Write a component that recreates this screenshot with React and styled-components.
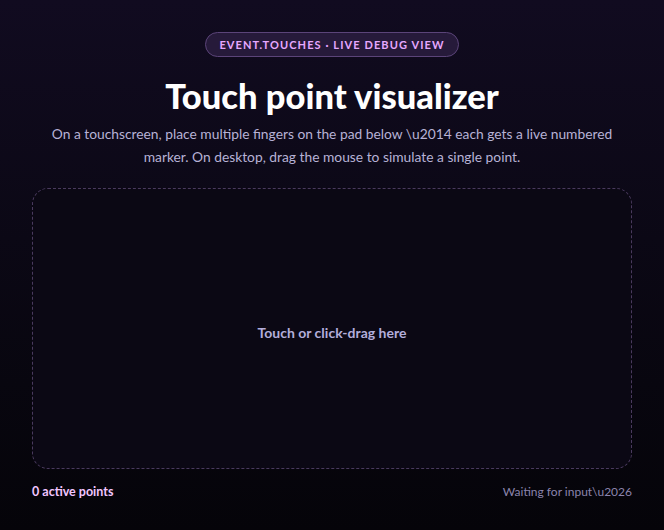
import React from "react";
import styled, { createGlobalStyle } from "styled-components";

const Global = createGlobalStyle`
  html, body { margin: 0; padding: 0; }
  body {
    min-height: 530px;
    background: linear-gradient(180deg, #110b20 0%, #0b0815 45%, #050409 100%);
    font-family: Lato, "Open Sans", sans-serif;
    color: #fff;
  }
`;

const Page = styled.main`
  max-width: 600px;
  margin: 0 auto;
  padding: 32px 0 0;
  display: flex;
  flex-direction: column;
  align-items: center;
`;

const Badge = styled.div`
  display: inline-flex;
  align-items: center;
  height: 25px;
  box-sizing: border-box;
  padding: 0 13px;
  border-radius: 999px;
  background: #261a3a;
  border: 1px solid #5b4479;
  color: #e6a8ff;
  font-size: 11px;
  font-weight: 700;
  letter-spacing: 1.1px;
`;

const Title = styled.h1`
  margin: 19px 0 0;
  font-size: 34.5px;
  line-height: 40px;
  font-weight: 900;
  color: #ffffff;
  letter-spacing: 0;
`;

const Lead = styled.p`
  margin: 6px 0 0;
  max-width: 570px;
  text-align: center;
  font-size: 13.8px;
  line-height: 23px;
  color: #b7b2d6;
`;

const Pad = styled.div`
  align-self: stretch;
  margin-top: 20px;
  height: 281px;
  box-sizing: border-box;
  padding-top: 8px;
  border: 1px dashed #4a3a5e;
  border-radius: 16px;
  background: #0b0814;
  display: flex;
  align-items: center;
  justify-content: center;
  color: #b3aedb;
  font-size: 14px;
  font-weight: 700;
`;

const Footer = styled.div`
  align-self: stretch;
  margin-top: 15px;
  display: flex;
  justify-content: space-between;
  align-items: center;
  font-size: 12px;
`;

const Count = styled.span`
  font-weight: 700;
  font-size: 12.5px;
  color: #f2c6ff;
`;

const Status = styled.span`
  color: #8b84ad;
`;

export default function App() {
  return (
    <>
      <Global />
      <Page>
        <Badge>EVENT.TOUCHES · LIVE DEBUG VIEW</Badge>
        <Title>Touch point visualizer</Title>
        <Lead>
          On a touchscreen, place multiple fingers on the pad below \u2014 each gets a live
          numbered marker. On desktop, drag the mouse to simulate a single point.
        </Lead>
        <Pad>Touch or click-drag here</Pad>
        <Footer>
          <Count>0 active points</Count>
          <Status>Waiting for input\u2026</Status>
        </Footer>
      </Page>
    </>
  );
}
